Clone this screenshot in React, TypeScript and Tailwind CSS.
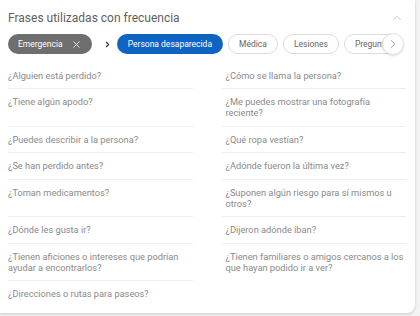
import { ChevronRight, ChevronUp, X } from "lucide-react"

type Frase = {
  texto: string
  ultima?: boolean
}

const frases: Frase[] = [
  { texto: "¿Alguien está perdido?" },
  { texto: "¿Cómo se llama la persona?" },
  { texto: "¿Tiene algún apodo?" },
  { texto: "¿Me puedes mostrar una fotografía reciente?" },
  { texto: "¿Puedes describir a la persona?" },
  { texto: "¿Qué ropa vestían?" },
  { texto: "¿Se han perdido antes?" },
  { texto: "¿Adónde fueron la última vez?" },
  { texto: "¿Toman medicamentos?" },
  { texto: "¿Suponen algún riesgo para sí mismos u otros?" },
  { texto: "¿Dónde les gusta ir?" },
  { texto: "¿Dijeron adónde iban?" },
  { texto: "¿Tienen aficiones o intereses que podrían ayudar a encontrarlos?" },
  { texto: "¿Tienen familiares o amigos cercanos a los que hayan podido ir a ver?", ultima: true },
  { texto: "¿Direcciones o rutas para paseos?", ultima: true },
]

const categorias = ["Médica", "Lesiones", "Preguntas"]

export default function App() {
  return (
    <div className="w-[420px] h-[316px] bg-[#f3f3f3] font-[Roboto,sans-serif] overflow-hidden">
      <div className="w-[415px] h-[313px] bg-white rounded-br-lg shadow-[0_1px_3px_rgba(0,0,0,0.18)] pl-[8px] pr-[9px] pt-[10px]">
        <div className="flex justify-between items-center h-[16px]">
          <h1 className="text-[12px] leading-[16px] text-[#5f5f5f]">Frases utilizadas con frecuencia</h1>
          <ChevronUp size={14} strokeWidth={1} className="text-[#a8a8a8] mr-[2px]" />
        </div>

        <div className="relative mt-[8px] h-[20px]">
          <div className="flex items-center gap-[5px] overflow-hidden h-[20px] w-[388px]">
            <div className="flex items-center shrink-0 h-[20px] rounded-full bg-[#6e6e6e] pl-[10px] pr-[10px] gap-[8px]">
              <span className="text-[8.5px] text-white">Emergencia</span>
              <X size={11} strokeWidth={1.8} className="text-white" />
            </div>
            <ChevronRight size={9} strokeWidth={3} className="shrink-0 text-[#333] ml-[6px]" />
            <div className="flex items-center shrink-0 h-[20px] rounded-full bg-[#0f63c2] px-[11px]">
              <span className="text-[8.5px] text-white">Persona desaparecida</span>
            </div>
            {categorias.map((c) => (
              <div key={c} className="flex items-center shrink-0 h-[20px] rounded-full border border-[#dcdcdc] bg-white px-[10px]">
                <span className="text-[8.5px] text-[#666]">{c}</span>
              </div>
            ))}
          </div>
          <button className="absolute right-[2px] top-[-1px] w-[22px] h-[22px] rounded-full bg-white border border-[#e2e2e2] shadow-[0_1px_2px_rgba(0,0,0,0.12)] flex items-center justify-center">
            <ChevronRight size={14} strokeWidth={1.3} className="text-[#777]" />
          </button>
        </div>

        <div className="grid grid-cols-2 gap-x-[29px] mt-[8.5px]">
          {frases.map((f, i) => (
            <div
              key={i}
              className={
                "pt-[7px] pb-[7.5px] text-[9.25px] leading-[11px] text-[#8a8a8a] " +
                (f.ultima ? "" : "border-b border-[#eeeeee] ") +
                (i % 2 === 1 ? "pl-[4px]" : "")
              }
            >
              {f.texto}
            </div>
          ))}
        </div>
      </div>
    </div>
  )
}
